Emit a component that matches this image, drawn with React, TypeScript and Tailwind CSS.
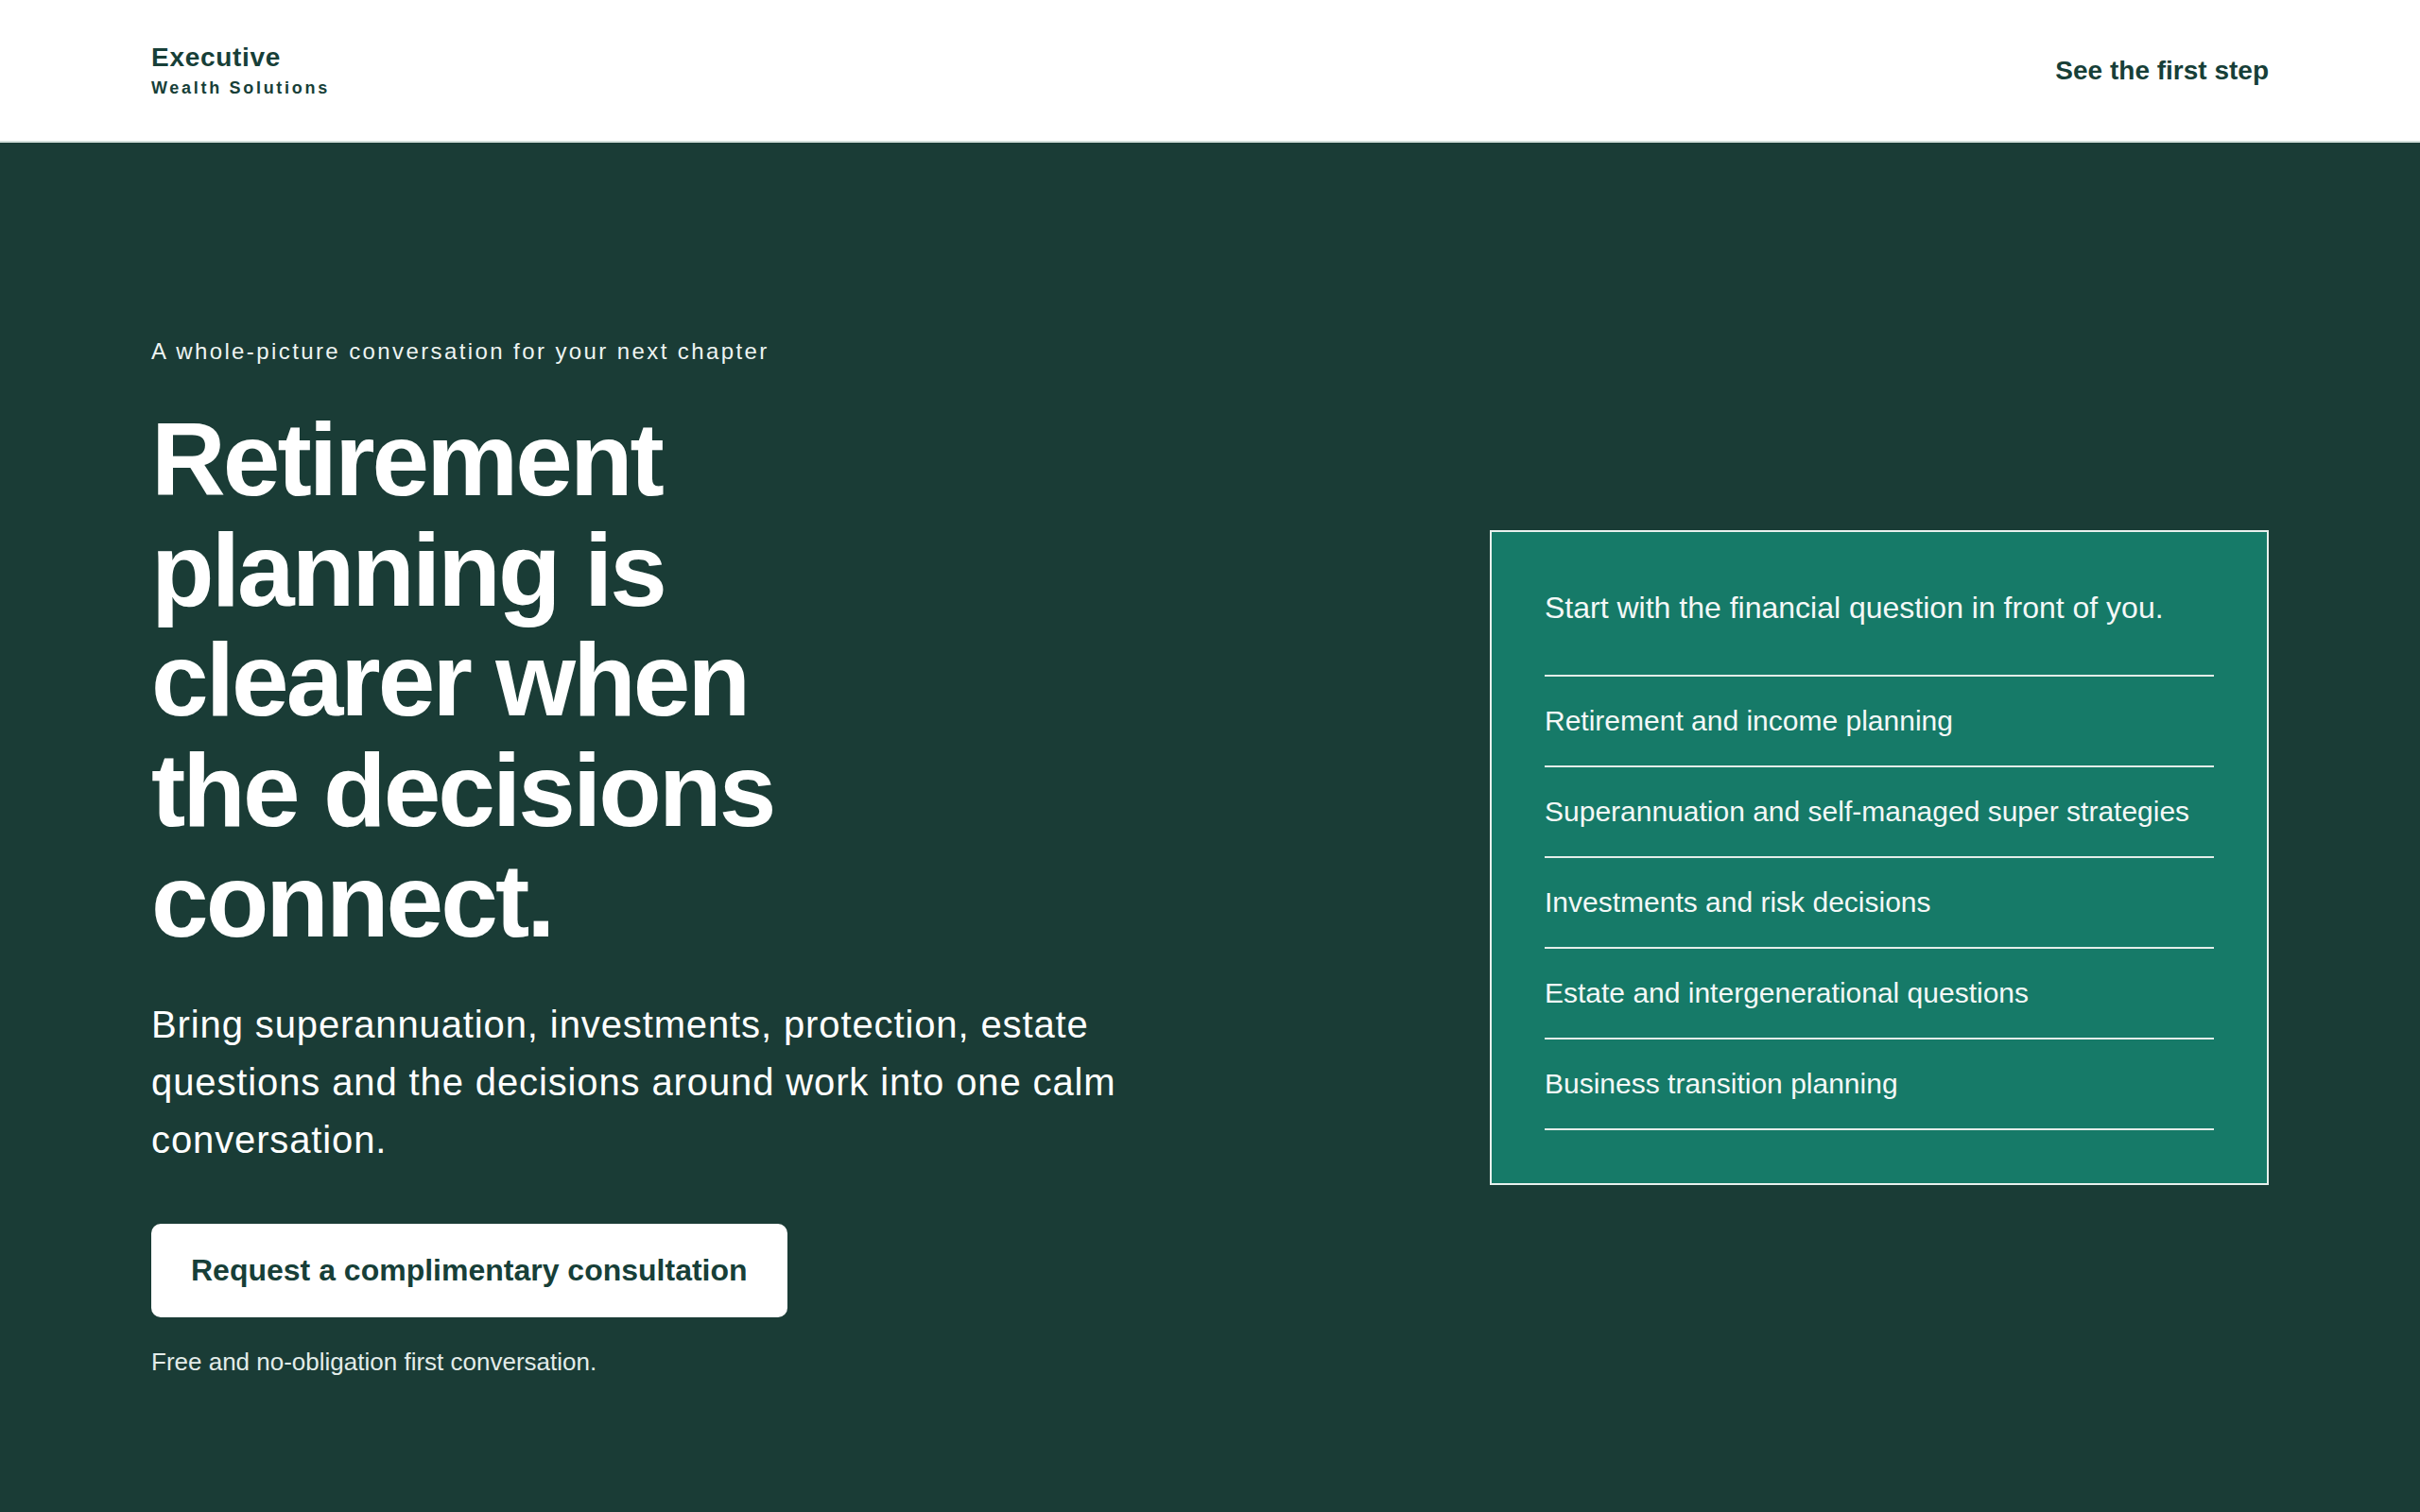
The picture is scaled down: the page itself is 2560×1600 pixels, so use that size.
import React from "react";

const items = [
  "Retirement and income planning",
  "Superannuation and self-managed super strategies",
  "Investments and risk decisions",
  "Estate and intergenerational questions",
  "Business transition planning",
];

export default function App() {
  return (
    <div className="min-h-screen bg-[#1a3c36] font-['Liberation_Sans',Arial,sans-serif]">
      <header className="h-[151px] bg-white border-b-2 border-[#d3dfdb] px-[160px] flex items-center justify-between">
        <div className="flex flex-col">
          <span className="text-[28px] leading-[1.2] font-bold tracking-[0.025em] text-[#173f38]">
            Executive
          </span>
          <span className="mt-[5px] text-[18px] leading-[1.2] font-bold tracking-[0.15em] text-[#173f38]">
            Wealth Solutions
          </span>
        </div>
        <a className="text-[28px] font-bold text-[#173f38]">See the first step</a>
      </header>

      <main className="px-[160px] pt-[203px] pb-[140px] flex items-center justify-between gap-16">
        <div className="flex-1 flex flex-col items-start">
          <p className="text-[24px] leading-[1.5] tracking-[0.1em] text-[#eef4f2]">
            A whole-picture conversation for your next chapter
          </p>
          <h1 className="mt-[38px] max-w-[720px] text-[109px] leading-[1.07] font-bold tracking-[-0.027em] text-white">
            Retirement planning is clearer when the decisions connect.
          </h1>
          <p className="mt-[43px] max-w-[1100px] text-[40px] leading-[1.52] tracking-[0.022em] text-white">
            Bring superannuation, investments, protection, estate questions and the decisions around work into one calm conversation.
          </p>
          <button className="mt-[58px] h-[99px] px-[42px] rounded-[10px] bg-white text-[32px] font-bold text-[#173f38] flex items-center">
            Request a complimentary consultation
          </button>
          <p className="mt-7 text-[26px] leading-[1.5] text-[#e3ece9]">
            Free and no-obligation first conversation.
          </p>
        </div>

        <aside className="w-[824px] shrink-0 bg-[#167a68] border-2 border-[#e8f0ed] px-[56px] pt-[58px] pb-[56px]">
          <p className="text-[32px] leading-[1.4] text-[#f4f8f7] mb-[48px]">
            Start with the financial question in front of you.
          </p>
          <ul className="border-t-2 border-[#e3ede9]">
            {items.map((it) => (
              <li
                key={it}
                className="py-[24.5px] border-b-2 border-[#e3ede9] text-[30px] leading-[1.5] text-[#f4f8f7]"
              >
                {it}
              </li>
            ))}
          </ul>
        </aside>
      </main>
    </div>
  );
}
